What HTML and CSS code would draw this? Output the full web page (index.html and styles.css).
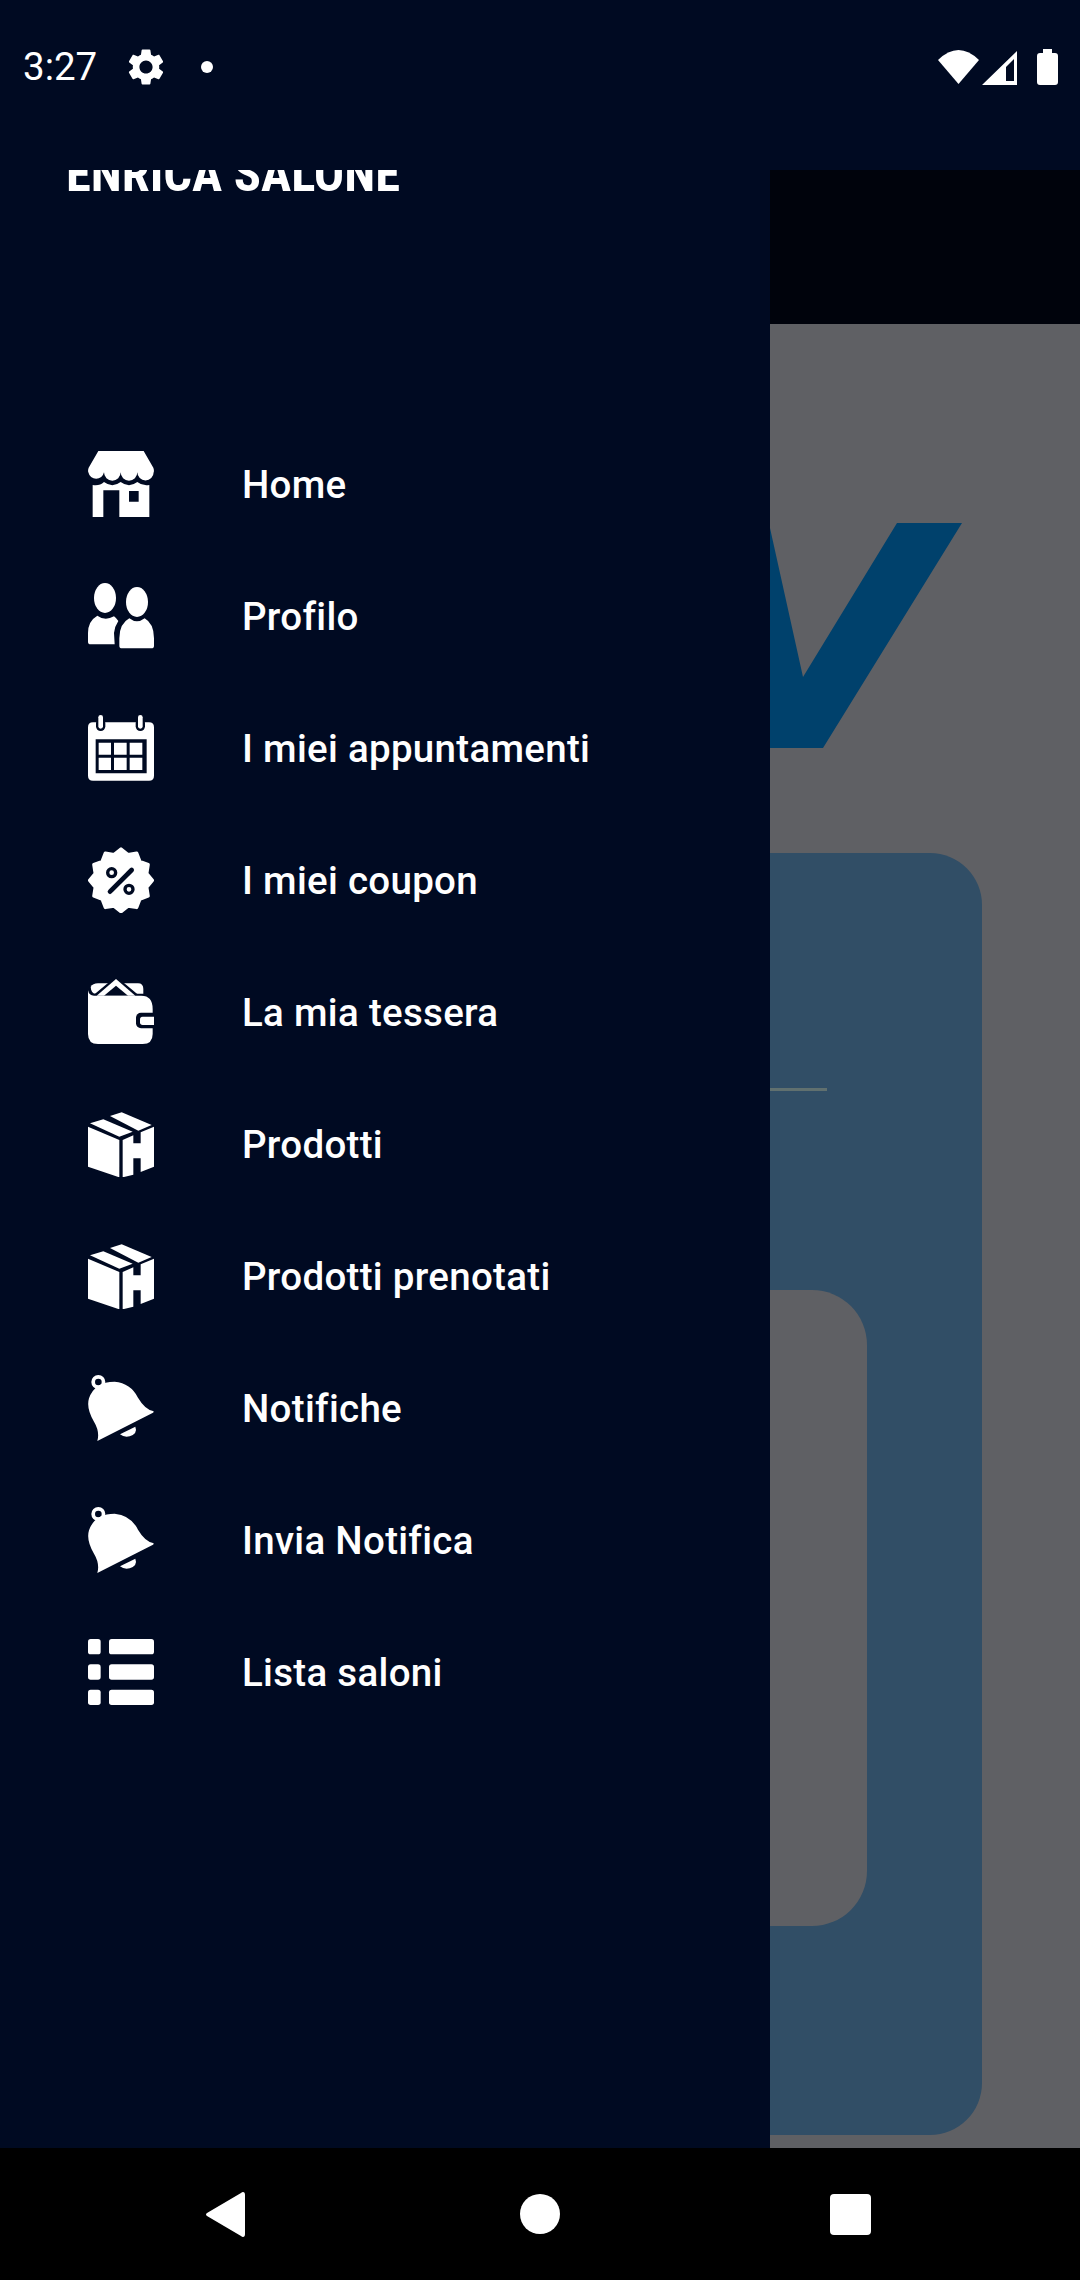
FILE: index.html
```html
<!DOCTYPE html>
<html lang="en">
<head>
  <meta charset="UTF-8">
  <meta name="viewport" content="width=device-width, initial-scale=1.0">
  <title>Enrica Salone - Menu</title>
  <link rel="stylesheet" href="styles.css">
</head>
<body>

  <svg class="defs" width="0" height="0" aria-hidden="true">
    <symbol id="ic-store" viewBox="0 0 198 198">
      <path d="M31 0H167L196 50Q199 58 197 64A24.5 24.5 0 0 1 148 64A25 25 0 0 1 98 64A25 25 0 0 1 48 64A24 24 0 0 1 1 64Q-1 58 2 50Z"/>
      <path fill-rule="evenodd" d="M14 102Q34 106 48 93Q73 112 98 93Q123 112 148 93Q164 106 184 102V198H94V118H46V198H14ZM123 120H152V152H123Z"/>
    </symbol>
    <symbol id="ic-people" viewBox="0 0 198 198">
      <ellipse cx="51" cy="45" rx="33" ry="45"/>
      <ellipse cx="147" cy="57" rx="33" ry="45"/>
      <path d="M28 98Q51 115 78 100Q86 106 91 114Q80 130 78 150L80 184H8Q0 184 0 176V150Q0 114 28 98Z"/>
      <path d="M124 106Q147 124 170 106Q198 122 198 166V188Q198 196 190 196H102Q94 196 94 188V166Q94 122 124 106Z"/>
    </symbol>
    <symbol id="ic-calendar" viewBox="0 0 198 198">
      <path fill-rule="evenodd" d="M15 22H183Q198 22 198 37V182Q198 197 183 197H15Q0 197 0 182V37Q0 22 15 22ZM23 73V175H176V73ZM32 83H69V119H32ZM78 83H116V119H78ZM125 83H163V119H125ZM32 128H69V165H32ZM78 128H116V165H78ZM125 128H163V165H125Z"/>
      <rect class="cut" x="24" y="10" width="28" height="38" rx="14"/>
      <rect class="cut" x="143" y="10" width="28" height="38" rx="14"/>
      <rect x="31" y="0" width="14" height="41" rx="7"/>
      <rect x="150" y="0" width="14" height="41" rx="7"/>
    </symbol>
    <symbol id="ic-coupon" viewBox="0 0 198 198">
      <polygon class="badge" points="99,6 119.7,22.7 146,18.6 155.6,43.4 180.4,53 176.3,79.3 193,100 176.3,120.7 180.4,147 155.6,156.6 146,181.4 119.7,177.3 99,194 78.3,177.3 52,181.4 42.4,156.6 17.6,147 21.7,120.7 5,100 21.7,79.3 17.6,53 42.4,43.4 52,18.6 78.3,22.7"/>
      <line class="cut-line" x1="66" y1="134" x2="131" y2="69"/>
      <circle class="cut-ring" cx="71" cy="77" r="12"/>
      <circle class="cut-ring" cx="123" cy="127" r="12"/>
    </symbol>
    <symbol id="ic-wallet" viewBox="0 0 198 198">
      <path d="M8 24Q14 13 30 13H150Q166 13 166 30V44H22Q10 44 8 24Z"/>
      <polygon class="cut" points="14,50 84,-8 154,50"/>
      <polygon points="26,50 84,0 142,50"/>
      <polygon class="cut" points="48,50 84,20 120,50"/>
      <path d="M0 34Q3 50 18 50H160Q194 50 194 90V165Q194 195 164 195H30Q0 195 0 165Z"/>
      <rect class="cut" x="144" y="101" width="70" height="47" rx="15"/>
      <rect x="156" y="113" width="60" height="25" rx="8"/>
    </symbol>
    <symbol id="ic-box" viewBox="0 0 198 198">
      <polygon points="0,47 94,87 94,199 0,167"/>
      <polygon points="104,87 136,73 136,97 158,97 158,64 198,47 198,167 158,183 158,142 136,142 136,191 104,199"/>
      <polygon points="6,37 46,25 134,62 94,77"/>
      <polygon points="66,15 101,4 191,42 151,59"/>
    </symbol>
    <symbol id="ic-bell" viewBox="0 0 198 198">
      <path fill-rule="evenodd" d="M31 0A21 21 0 1 1 30.9 42A21 21 0 0 1 31 0ZM31 11A10 10 0 1 0 31.1 31A10 10 0 0 0 31 11Z"/>
      <path d="M28 198L195 113Q199 110 195 108Q170 102 150 68Q128 24 80 20Q20 20 3 70Q-6 100 18 140Q36 170 28 198Z"/>
      <path d="M96 178L142 155Q150 175 125 184Q108 188 96 178Z"/>
    </symbol>
    <symbol id="ic-list" viewBox="0 0 198 198">
      <rect x="0" y="0" width="38" height="46" rx="8"/>
      <rect x="63" y="0" width="135" height="46" rx="8"/>
      <rect x="0" y="76" width="38" height="46" rx="8"/>
      <rect x="63" y="76" width="135" height="46" rx="8"/>
      <rect x="0" y="152" width="38" height="46" rx="8"/>
      <rect x="63" y="152" width="135" height="46" rx="8"/>
    </symbol>
  </svg>

  <div class="screen">

    <!-- Status bar -->
    <header class="status-bar">
      <span class="clock">3:27</span>
      <svg class="status-gear" viewBox="0 0 24 24">
        <path d="M19.14 12.94c.04-.3.06-.61.06-.94 0-.32-.02-.64-.07-.94l2.03-1.58c.18-.14.23-.41.12-.61l-1.92-3.32c-.12-.22-.37-.29-.59-.22l-2.39.96c-.5-.38-1.03-.7-1.62-.94l-.36-2.54c-.04-.24-.24-.41-.48-.41h-3.84c-.24 0-.43.17-.47.41l-.36 2.54c-.59.24-1.13.57-1.62.94l-2.39-.96c-.22-.08-.47 0-.59.22L2.74 8.87c-.12.21-.08.47.12.61l2.03 1.58c-.05.3-.09.63-.09.94s.02.64.07.94l-2.03 1.58c-.18.14-.23.41-.12.61l1.92 3.32c.12.22.37.29.59.22l2.39-.96c.5.38 1.03.7 1.62.94l.36 2.54c.05.24.24.41.48.41h3.84c.24 0 .44-.17.47-.41l.36-2.54c.59-.24 1.13-.56 1.62-.94l2.39.96c.22.08.47 0 .59-.22l1.92-3.32c.12-.22.07-.47-.12-.61l-2.01-1.58zM12 15.6c-1.98 0-3.6-1.62-3.6-3.6s1.62-3.6 3.6-3.6 3.6 1.62 3.6 3.6-1.62 3.6-3.6 3.6z"/>
      </svg>
      <span class="status-dot"></span>
      <div class="status-right">
        <svg class="status-wifi" viewBox="0 0 41 34"><path d="M0 10Q20.5 -10 41 10L20.5 34Z"/></svg>
        <svg class="status-signal" viewBox="0 0 35 34"><path fill-rule="evenodd" d="M0 34L35 0V34ZM24 16V30H32V8Z"/></svg>
        <svg class="status-battery" viewBox="0 0 21 36"><path d="M6 0H15V4H18Q21 4 21 7V33Q21 36 18 36H3Q0 36 0 33V7Q0 4 3 4H6Z"/></svg>
      </div>
    </header>

    <div class="main">

      <!-- Drawer -->
      <nav class="drawer">
        <div class="drawer-head">
          <div class="drawer-title">ENRICA SALONE</div>
        </div>
        <ul class="menu">
          <li class="menu-item"><svg class="menu-icon"><use href="#ic-store"/></svg><span>Home</span></li>
          <li class="menu-item"><svg class="menu-icon"><use href="#ic-people"/></svg><span>Profilo</span></li>
          <li class="menu-item"><svg class="menu-icon"><use href="#ic-calendar"/></svg><span>I miei appuntamenti</span></li>
          <li class="menu-item"><svg class="menu-icon"><use href="#ic-coupon"/></svg><span>I miei coupon</span></li>
          <li class="menu-item"><svg class="menu-icon"><use href="#ic-wallet"/></svg><span>La mia tessera</span></li>
          <li class="menu-item"><svg class="menu-icon"><use href="#ic-box"/></svg><span>Prodotti</span></li>
          <li class="menu-item"><svg class="menu-icon"><use href="#ic-box"/></svg><span>Prodotti prenotati</span></li>
          <li class="menu-item"><svg class="menu-icon"><use href="#ic-bell"/></svg><span>Notifiche</span></li>
          <li class="menu-item"><svg class="menu-icon"><use href="#ic-bell"/></svg><span>Invia Notifica</span></li>
          <li class="menu-item"><svg class="menu-icon"><use href="#ic-list"/></svg><span>Lista saloni</span></li>
        </ul>
      </nav>

      <!-- Page behind the drawer (dimmed) -->
      <div class="backdrop">
        <div class="app-bar"></div>
        <div class="page">
          <svg class="logo" viewBox="0 0 310 225"><polygon points="0,5 33,154 127,0 192,0 53,225 0,225"/></svg>
          <div class="card">
            <div class="card-line"></div>
            <div class="card-inner"></div>
          </div>
        </div>
      </div>

    </div>

    <!-- Navigation bar -->
    <footer class="nav-bar">
      <svg class="nav-back" viewBox="0 0 39 45"><path d="M37 0Q39 0 39 3V42Q39 45 37 45Q36 45 35 44L1 24Q-1 22.5 1 21L35 1Q36 0 37 0Z"/></svg>
      <span class="nav-home"></span>
      <span class="nav-recent"></span>
    </footer>

  </div>

</body>
</html>
```

FILE: styles.css
```css
/* Base */
* {
  box-sizing: border-box;
}

body {
  margin: 0;
  font-family: Roboto, "Liberation Sans", sans-serif;
  color: #fff;
  background: #000;
}

.defs {
  display: block;
  height: 0;
}

.screen {
  width: 1080px;
  height: 2280px;
  display: flex;
  flex-direction: column;
  overflow: hidden;
}

/* Status bar */
.status-bar {
  height: 170px;
  flex: none;
  display: flex;
  align-items: flex-start;
  padding: 49px 22px 0 23px;
  background: #000a22;
  fill: #fff;
}

.clock {
  font-size: 38.5px;
  line-height: 36px;
  width: 101px;
}

.status-gear {
  width: 44px;
  height: 44px;
  margin-top: -4px;
}

.status-dot {
  width: 12px;
  height: 12px;
  margin: 12px 0 0 33px;
  border-radius: 50%;
  background: #fff;
}

.status-right {
  margin-left: auto;
  display: flex;
  align-items: flex-start;
}

.status-wifi {
  width: 41px;
  height: 34px;
  margin-top: 1px;
}

.status-signal {
  width: 35px;
  height: 34px;
  margin: 2px 0 0 3px;
}

.status-battery {
  width: 21px;
  height: 36px;
  margin-left: 20px;
}

/* Main area */
.main {
  flex: 1;
  display: flex;
  min-height: 0;
}

/* Drawer */
.drawer {
  width: 770px;
  flex: none;
  background: #000a22;
}

.drawer-head {
  height: 248px;
  overflow: hidden;
}

.drawer-title {
  margin: -22px 0 0 66px;
  font-size: 50.5px;
  line-height: 52px;
  font-weight: 700;
  font-stretch: 75%;
  white-space: nowrap;
}

.menu {
  list-style: none;
  margin: 0;
  padding: 0;
}

.menu-item {
  height: 132px;
  display: flex;
  align-items: center;
  gap: 88px;
  padding-left: 88px;
  font-size: 38.5px;
  font-weight: 500;
  letter-spacing: 0.3px;
}

.menu-item span {
  padding-top: 1px;
}

.menu-icon {
  width: 66px;
  height: 66px;
  flex: none;
  fill: #fff;
  overflow: visible;
}

.cut {
  fill: #000a22;
}

.badge {
  stroke: #fff;
  stroke-width: 10;
  stroke-linejoin: round;
}

.cut-line {
  stroke: #000a22;
  stroke-width: 14;
  stroke-linecap: round;
}

.cut-ring {
  fill: none;
  stroke: #000a22;
  stroke-width: 10;
}

/* Dimmed page */
.backdrop {
  flex: 1;
  min-width: 0;
  display: flex;
  flex-direction: column;
  background: #5f6064;
  overflow: hidden;
}

.app-bar {
  height: 154px;
  flex: none;
  background: #00030c;
}

.page {
  flex: 1;
  padding-top: 199px;
}

.logo {
  display: block;
  width: 310px;
  height: 225px;
  fill: #00416c;
}

.card {
  width: 212px;
  height: 1282px;
  margin-top: 105px;
  padding-top: 235px;
  background: #314e66;
  border-radius: 0 52px 52px 0;
}

.card-line {
  width: 57px;
  height: 3px;
  background: #60706f;
}

.card-inner {
  width: 97px;
  height: 636px;
  margin-top: 199px;
  background: #5f6064;
  border-radius: 0 55px 55px 0;
}

/* Navigation bar */
.nav-bar {
  height: 132px;
  flex: none;
  display: flex;
  align-items: center;
  padding-left: 206px;
  background: #000;
  fill: #fff;
}

.nav-back {
  width: 39px;
  height: 45px;
}

.nav-home {
  width: 40px;
  height: 40px;
  margin: 0 270px 0 275px;
  border-radius: 50%;
  background: #fff;
}

.nav-recent {
  width: 41px;
  height: 41px;
  border-radius: 4px;
  background: #fff;
}
```
